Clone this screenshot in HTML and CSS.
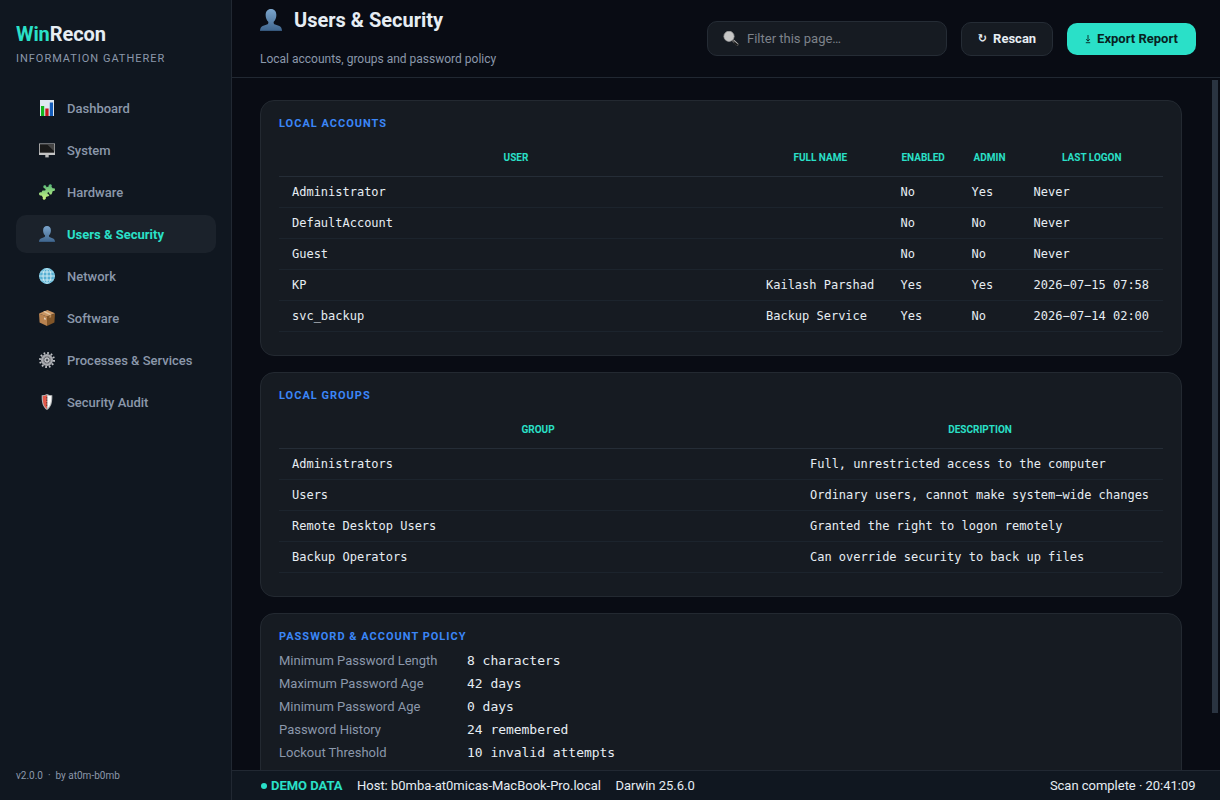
FILE: index.html
```html
<!DOCTYPE html>
<html lang="en">
<head>
<meta charset="utf-8">
<title>WinRecon</title>
<link rel="stylesheet" href="styles.css">
</head>
<body>
<svg width="0" height="0" class="defs" aria-hidden="true">
  <defs>
    <linearGradient id="gUser" x1="0" y1="0" x2="0" y2="1"><stop offset="0" stop-color="#7ba5cc"/><stop offset="1" stop-color="#3f658d"/></linearGradient>
    <linearGradient id="gPuzzle" x1="0" y1="0" x2="0" y2="1"><stop offset="0" stop-color="#55b878"/><stop offset="1" stop-color="#d0f583"/></linearGradient>
    <symbol id="user" viewBox="0 0 16 16">
      <path fill="url(#gUser)" d="M8 0C5.500 0 4.100 1.800 4.100 4.400c0 2 .7 3.800 1.900 4.800.3 1-.1 1.700-1 2.100L1.900 12.400C.7 12.900.1 14.100 0 16h16c-.1-1.900-.7-3.100-1.900-3.600L11 11.300c-.9-.4-1.300-1.100-1-2.100 1.200-1 1.900-2.800 1.900-4.800C11.900 1.800 10.500 0 8 0z"/>
      <path fill="#304f70" opacity=".6" d="M.1 15.200h15.800l.1.800H0z"/>
    </symbol>
  </defs>
</svg>
<div class="app">
  <aside class="sidebar">
    <div class="brand"><span class="accent">Win</span>Recon</div>
    <div class="tagline">INFORMATION GATHERER</div>
    <nav class="nav">
      <a class="nav-item"><svg class="icon" viewBox="0 0 16 16"><path fill="#dfe8f1" d="M1 0h14v16H1z"/><path fill="#13b51c" d="M2 6h3.200v10H2z"/><path fill="#c5161d" d="M6.300 8.500h3.300V16H6.300z"/><path fill="#155dbb" d="M10.800 2.500h3.200V16h-3.200z"/></svg>Dashboard</a>
      <a class="nav-item"><svg class="icon" viewBox="0 0 16 16"><path fill="#c4c4c4" d="M0 1.500h16v11.500H0z"/><path fill="#191919" d="M.8 2.200h14.400v8.500H.8z"/><path fill="#454545" d="M8 2.200h7.200v7z"/><path fill="#bbb" d="M6.300 13h3.400v2.400H6.300z"/></svg>System</a>
      <a class="nav-item"><svg class="icon" viewBox="0 0 16 16"><path fill="url(#gPuzzle)" d="M5.300 4.200C4 3.800 4 1.800 5.200 1.300 6.500.8 7.700 2 7.300 3.200l2.400-.7C9.300 1.200 10.200 0 11.500.2c1.300.2 1.700 1.600.9 2.500L14 4.500c.8-.7 2-.2 2 1 0 1.300-1.200 1.900-2.200 1.400l-1.200 3.300c-1 .6-2.200.1-2.300-1-.1-.8-.9-1.200-1.500-.7-.7.6-.4 1.500.4 1.700 1 .3 1.300 1.100.8 1.900L6.800 13c.5 1.300-.2 2.800-1.500 2.800-1.400 0-2-1.400-1.400-2.500L2.400 11.400C1.300 12 .1 11.300 0 10.100-.1 8.700 1.200 8 2.300 8.500l1.200-1.900c1-.5 1.800.2 2.600-.2 1-.6.4-1.900-.8-2.200z"/></svg>Hardware</a>
      <a class="nav-item active"><svg class="icon"><use href="#user"/></svg>Users &amp; Security</a>
      <a class="nav-item"><svg class="icon" viewBox="0 0 16 16"><circle cx="8" cy="8" r="7.900" fill="#56afd3"/><g fill="none" stroke="#cdeaf2" stroke-width="1"><path d="M8 0v16M0 8h16M1.500 4h13M1.500 12h13"/><ellipse cx="8" cy="8" rx="4" ry="7.500"/><circle cx="8" cy="8" r="7.400" stroke="#8ed0e5" stroke-width=".7"/></g></svg>Network</a>
      <a class="nav-item"><svg class="icon" viewBox="0 0 16 16"><path fill="#b98350" d="M0 3.400l8 3V16l-7.400-3.500z"/><path fill="#825629" d="M16 3.400l-8 3V16l7.400-3.500z"/><path fill="#c99563" d="M0 3.400L8.500 0 16 3.300 8 6.400z"/><path fill="#e3c7a3" d="M4.200 1.700l1.500-.6 6.500 3.100-1.700.7z"/><path fill="#b58a5a" d="M10.500 5.400l1.700-.7v2.600l-1.700.7z"/><path fill="#e7d3bb" d="M5 7.400l1.700.6v2L5 9.300z"/></svg>Software</a>
      <a class="nav-item"><svg class="icon" viewBox="0 0 16 16"><circle cx="8" cy="8" r="7" fill="none" stroke="#bfc1c5" stroke-width="2" stroke-dasharray="1.700 1.965"/><circle cx="8" cy="8" r="4.900" fill="#6c6e74" stroke="#a9abb0" stroke-width="2.300"/><path stroke="#8d9096" stroke-width=".8" d="M8 4v8M4 8h8M5 5l6 6M5 11l6-6"/><circle cx="8" cy="8" r="2" fill="#555960" stroke="#dcdde0"/></svg>Processes &amp; Services</a>
      <a class="nav-item"><svg class="icon" viewBox="0 0 16 16"><path fill="#b5b7b8" d="M2.700 1.200Q5.800 1.200 8 0q2.200 1.200 5.300 1.200c.2 7.500-1.100 12-5.300 14.800C3.800 13.200 2.500 8.700 2.700 1.200z"/><path fill="#e2584a" d="M3.800 2Q6.200 1.900 8 1v13.900C4.700 12.300 3.700 8.600 3.800 2z"/><path fill="#fafafa" d="M8.700 1.500q1.400.5 3.500.5c0 6.300-.7 9.500-3.500 12z"/><path stroke="#873b32" stroke-width="1.200" stroke-dasharray="1.500 1" d="M7.600 3v9"/></svg>Security Audit</a>
    </nav>
    <div class="version">v2.0.0 &nbsp;·&nbsp; by at0m-b0mb</div>
  </aside>
  <main class="main">
    <header class="header">
      <div class="heading">
        <h1><svg class="title-icon"><use href="#user"/></svg>Users &amp; Security</h1>
        <p>Local accounts, groups and password policy</p>
      </div>
      <div class="actions">
        <div class="search"><svg class="icon" viewBox="0 0 16 16"><path stroke="#555" stroke-width="3" stroke-linecap="round" d="M10.500 10l3.700 3.300"/><path stroke="#161616" stroke-width="1.500" d="M11.300 11.500l3 2.600"/><path stroke="#aaa" stroke-width="1" d="M10.700 9l4 3.700"/><circle cx="6" cy="5.300" r="5.100" fill="#c6c6c6" stroke="#a0a0a0" stroke-width=".7"/></svg><span>Filter this page…</span></div>
        <button class="btn rescan"><span class="glyph">↻</span>Rescan</button>
        <button class="btn export"><svg class="download" viewBox="0 0 6 10"><path d="M3 1v6M1.200 5.200L3 7.200l1.800-2M.8 8.700h4.400"/></svg>Export Report</button>
      </div>
    </header>
    <div class="content">
      <section class="card">
        <h2>LOCAL ACCOUNTS</h2>
        <table class="accounts">
          <colgroup><col class="c-user"><col class="c-name"><col class="c-enabled"><col class="c-admin"><col class="c-logon"></colgroup>
          <thead><tr><th>USER</th><th>FULL NAME</th><th>ENABLED</th><th>ADMIN</th><th>LAST LOGON</th></tr></thead>
          <tbody>
            <tr><td>Administrator</td><td></td><td>No</td><td>Yes</td><td>Never</td></tr>
            <tr><td>DefaultAccount</td><td></td><td>No</td><td>No</td><td>Never</td></tr>
            <tr><td>Guest</td><td></td><td>No</td><td>No</td><td>Never</td></tr>
            <tr><td>KP</td><td>Kailash Parshad</td><td>Yes</td><td>Yes</td><td>2026−07−15 07:58</td></tr>
            <tr><td>svc_backup</td><td>Backup Service</td><td>Yes</td><td>No</td><td>2026−07−14 02:00</td></tr>
          </tbody>
        </table>
      </section>
      <section class="card">
        <h2>LOCAL GROUPS</h2>
        <table class="groups">
          <colgroup><col class="c-group"><col class="c-desc"></colgroup>
          <thead><tr><th>GROUP</th><th>DESCRIPTION</th></tr></thead>
          <tbody>
            <tr><td>Administrators</td><td>Full, unrestricted access to the computer</td></tr>
            <tr><td>Users</td><td>Ordinary users, cannot make system−wide changes</td></tr>
            <tr><td>Remote Desktop Users</td><td>Granted the right to logon remotely</td></tr>
            <tr><td>Backup Operators</td><td>Can override security to back up files</td></tr>
          </tbody>
        </table>
      </section>
      <section class="card policy-card">
        <h2>PASSWORD &amp; ACCOUNT POLICY</h2>
        <dl class="policy">
          <dt>Minimum Password Length</dt><dd>8 characters</dd>
          <dt>Maximum Password Age</dt><dd>42 days</dd>
          <dt>Minimum Password Age</dt><dd>0 days</dd>
          <dt>Password History</dt><dd>24 remembered</dd>
          <dt>Lockout Threshold</dt><dd>10 invalid attempts</dd>
        </dl>
      </section>
      <div class="scroll-thumb"></div>
    </div>
    <footer class="status">
      <span class="demo"><i class="dot"></i>DEMO DATA</span>
      <span>Host: b0mba-at0micas-MacBook-Pro.local</span>
      <span>Darwin 25.6.0</span>
      <span class="scan">Scan complete · 20:41:09</span>
    </footer>
  </main>
</div>
</body>
</html>
```
FILE: styles.css
```css
* { box-sizing: border-box; }
body { margin: 0; background: #090c14; color: #e6edf3; font-family: Roboto, sans-serif; font-size: 13px; }
h1, h2, p, dl, dd { margin: 0; }
.defs { position: absolute; }
.app { display: flex; width: 1220px; height: 800px; overflow: hidden; }

.sidebar { width: 232px; flex: none; display: flex; flex-direction: column; padding: 22px 15px 16px 16px; background: #101720; border-right: 1px solid #212832; }
.brand { font-size: 20px; font-weight: 700; line-height: 24px; letter-spacing: -0.1px; }
.accent { color: #2ae0c8; }
.tagline { margin-top: 6px; font-size: 11px; line-height: 14px; letter-spacing: 0.98px; color: #8b98ab; }
.nav { display: flex; flex-direction: column; gap: 4px; margin-top: 23px; }
.nav-item { display: flex; align-items: center; height: 38px; padding-left: 23px; gap: 12px; border-radius: 10px; font-weight: 500; color: #8b98ab; white-space: nowrap; }
.nav-item.active { background: #1b222b; color: #2ae0c8; font-weight: 700; }
.icon { width: 16px; height: 16px; flex: none; }
.version { margin-top: auto; font-size: 10px; line-height: 16px; color: #8b98ab; }

.main { flex: 1; min-width: 0; display: flex; flex-direction: column; }
.header { height: 78px; flex: none; display: flex; justify-content: space-between; padding: 0 24px 0 28px; border-bottom: 1px solid #212832; }
.heading { padding-top: 8px; }
h1 { display: flex; align-items: center; gap: 12px; font-size: 20px; line-height: 24px; height: 24px; font-weight: 700; }
.title-icon { width: 22px; height: 22px; }
.heading p { margin-top: 19px; font-size: 12px; line-height: 16px; color: #8b98ab; }
.actions { display: flex; align-items: center; gap: 14px; }
.search { display: flex; align-items: center; gap: 8px; width: 240px; height: 35px; padding-left: 15px; border: 1px solid #252c35; border-radius: 10px; background: #161b22; color: #7d828a; }
.btn { display: flex; align-items: center; justify-content: center; padding: 0; border-radius: 10px; font: 700 13px Roboto, sans-serif; }
.glyph { font-family: "DejaVu Sans", sans-serif; font-size: 11px; line-height: 14px; margin: 1px 6px 0 0; }
.download { width: 6px; height: 10px; margin: 0 6px 0 0; fill: none; stroke: currentColor; stroke-width: 0.9; }
.rescan { width: 92px; height: 34px; border: 1px solid #252c35; background: #161b22; color: #e6edf3; }
.export { width: 129px; height: 32px; border: 0; background: #2ae0c8; color: #08221f; }

.content { position: relative; flex: 1; min-height: 0; overflow: hidden; padding: 22px 38px 0 28px; display: flex; flex-direction: column; gap: 16px; }
.card { flex: none; padding: 15px 18px 23px; border: 1px solid #232931; border-radius: 14px; background: #161b22; }
h2 { font-size: 11px; line-height: 16px; font-weight: 700; letter-spacing: 1px; color: #3b86f7; }
table { width: 100%; margin-top: 6px; table-layout: fixed; border-collapse: separate; border-spacing: 0; }
th { height: 39px; padding: 0; border-bottom: 1px solid #252d37; font-size: 10px; font-weight: 700; color: #2ae0c8; text-align: center; }
td { height: 31px; padding: 0 0 1px 13px; border-bottom: 1px solid #1c242d; font: 12px "DejaVu Sans Mono", monospace; letter-spacing: -0.01px; white-space: nowrap; }
.c-user { width: 474px; }
.c-name { width: 134.6px; }
.c-enabled { width: 71px; }
.c-admin { width: 62px; }
.c-logon { width: 142.4px; }
.c-group { width: 518px; }
.c-desc { width: 366px; }
.policy-card { height: 240px; }
.policy { display: grid; grid-template-columns: 188px 1fr; grid-auto-rows: 23px; align-items: center; margin-top: 4px; }
.policy dt { color: #8b98ab; }
.policy dd { font: 13px "DejaVu Sans Mono", monospace; letter-spacing: -0.03px; }
.scroll-thumb { position: absolute; top: 2px; right: 2px; width: 6px; height: 633px; background: #2a3441; }

.status { height: 30px; flex: none; display: flex; align-items: center; gap: 14.5px; padding: 0 24.500px 0 29px; border-top: 1px solid #212832; background: #101720; letter-spacing: -0.02px; }
.demo { display: flex; align-items: center; gap: 4px; color: #2ae0c8; font-weight: 700; }
.dot { width: 6px; height: 6px; margin-top: 1px; border-radius: 50%; background: #2ae0c8; }
.scan { margin-left: auto; }
```
